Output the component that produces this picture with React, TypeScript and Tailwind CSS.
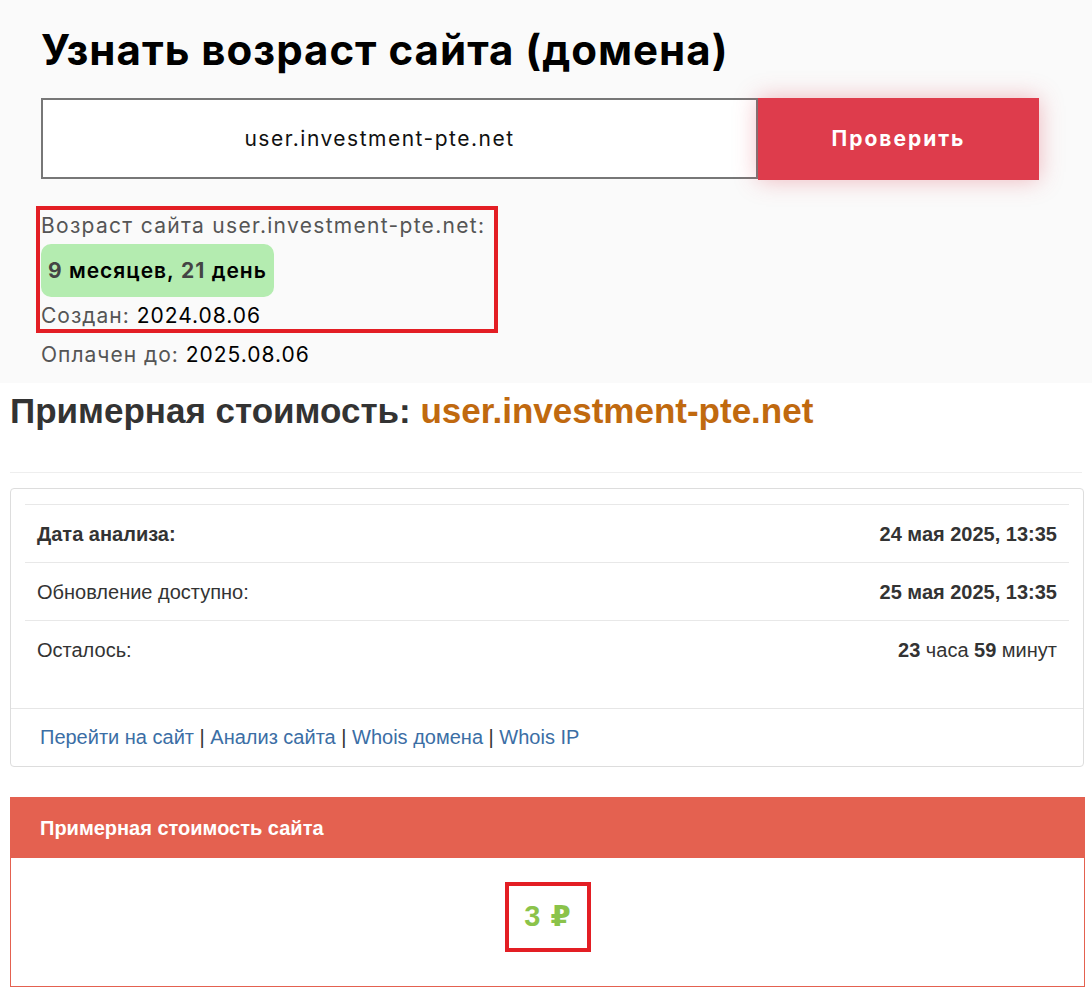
import { useState } from 'react';

const rows = [
  { label: 'Дата анализа:', labelBold: true, value: <b>24 мая 2025, 13:35</b> },
  { label: 'Обновление доступно:', labelBold: false, value: <b>25 мая 2025, 13:35</b> },
  {
    label: 'Осталось:',
    labelBold: false,
    value: (
      <>
        <b>23</b> часа <b>59</b> минут
      </>
    ),
  },
];

const links = ['Перейти на сайт', 'Анализ сайта', 'Whois домена', 'Whois IP'];

export default function App() {
  const [domain, setDomain] = useState('user.investment-pte.net');

  return (
    <div className="min-h-screen bg-white">
      <section className="bg-[#fafafa] pb-[15px] pl-[41px] pt-[24px] font-['Inter',sans-serif]">
        <h1 className="text-[42px] font-bold leading-[52px] tracking-[1px] text-black">
          Узнать возраст сайта (домена)
        </h1>

        <div className="mt-[22px] flex w-[998px]">
          <input
            value={domain}
            onChange={(e) => setDomain(e.target.value)}
            className="h-[81px] w-[717px] border-2 border-[#777] bg-white pr-[40px] text-center text-[21px] tracking-[1.5px] text-[#111] outline-none"
          />
          <button className="h-[82px] w-[281px] bg-[#de3c4c] text-[21px] font-bold tracking-[2px] text-white shadow-[0_0_22px_rgba(222,60,76,0.35)]">
            Проверить
          </button>
        </div>

        <div className="-ml-[5px] mt-[26px] w-[462px] border-4 border-[#e31e24] pl-[1px] pt-[3px] text-[21px] leading-[26px] tracking-[1px]">
          <p className="tracking-[1.3px] text-[#555]">Возраст сайта {domain}:</p>
          <div className="mt-[5px] flex h-[53px] w-[233px] items-center rounded-[10px] bg-[#b4ecb0] px-[7px] font-semibold text-black">
            <span className="font-bold text-[#444]">9</span>&nbsp;месяцев,&nbsp;
            <span className="font-bold text-[#444]">21</span>&nbsp;день
          </div>
          <p className="mt-[6px] text-[#555]">
            Создан: <span className="text-black">2024.08.06</span>
          </p>
        </div>
        <p className="mt-[9px] text-[21px] leading-[26px] tracking-[1px] text-[#555]">
          Оплачен до: <span className="text-black">2025.08.06</span>
        </p>
      </section>

      <section className="px-[10px] pb-[10px] pt-[8px] font-['Liberation_Sans',Arial,sans-serif] text-[#333]">
        <h2 className="text-[35px] font-bold leading-[40px] text-[#333]">
          Примерная стоимость: <span className="text-[#c0690f]">{domain}</span>
        </h2>
        <hr className="mt-[41px] border-t border-[#eee]" />

        <div className="mt-[15px] w-[1074px] rounded-[4px] border border-[#ddd]">
          <div className="px-[14px] pb-[30px] pt-[15px]">
            {rows.map((r) => (
              <div
                key={r.label}
                className="flex h-[58px] items-center justify-between border-t border-[#e8e8e8] px-[12px] text-[20px]"
              >
                <span className={r.labelBold ? 'font-bold' : ''}>{r.label}</span>
                <span>{r.value}</span>
              </div>
            ))}
          </div>
          <div className="h-[58px] border-t border-[#e6e6e6] pl-[29px] text-[20px] leading-[57px]">
            {links.map((l, i) => (
              <span key={l}>
                {i > 0 && <span className="text-[#333]">&nbsp;|&nbsp;</span>}
                <a href="#" className="text-[#3b6ea5]">
                  {l}
                </a>
              </span>
            ))}
          </div>
        </div>

        <div className="mt-[30px] w-[1075px] border border-[#e46150]">
          <div className="flex h-[60px] items-center bg-[#e46150] pl-[29px] text-[20px] font-bold text-white">
            Примерная стоимость сайта
          </div>
          <div className="flex justify-center pb-[34px] pt-[24px]">
            <div className="flex h-[70px] w-[86px] items-center justify-center border-4 border-[#e31e24] text-[29px] font-bold text-[#8bc34a]">
              3<span className="ml-[10px] font-['DejaVu_Sans',sans-serif]">₽</span>
            </div>
          </div>
        </div>
      </section>
    </div>
  );
}
